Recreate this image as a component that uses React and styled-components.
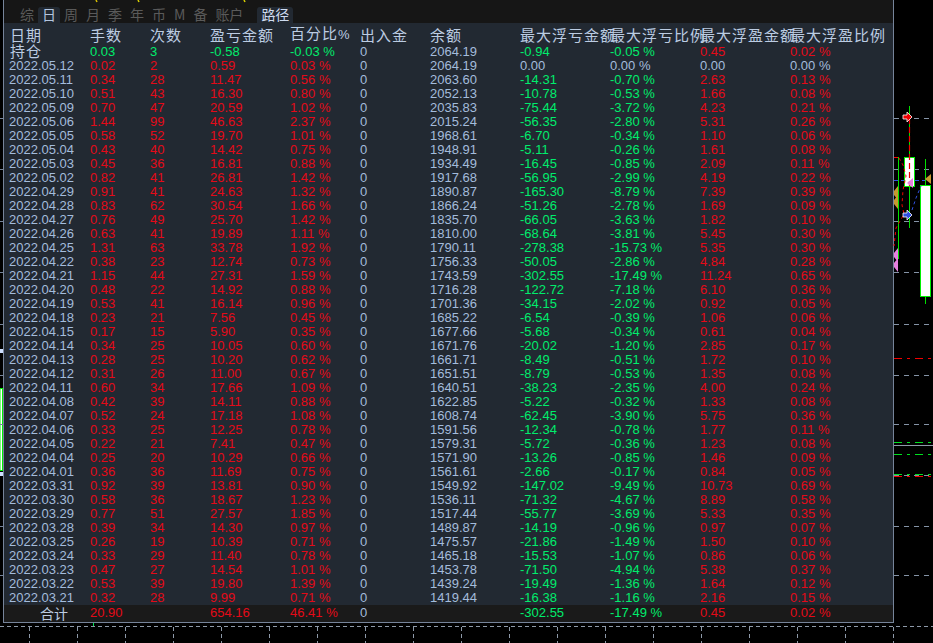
import React from 'react'
import styled, { createGlobalStyle } from 'styled-components'

const RED = '#e40a18'
const GREEN = '#00ec6c'
const BLUE = '#a4bcdc'

const tabs = [
    { label: '综' },
    { label: '日', active: true },
    { label: '周' },
    { label: '月' },
    { label: '季' },
    { label: '年' },
    { label: '币' },
    { label: 'M' },
    { label: '备' },
    { label: '账户' },
    { label: '路径', active: true, bright: true, gap: true },
]

const headers = [
    { label: '日期' },
    { label: '手数' },
    { label: '次数' },
    { label: '盈亏金额' },
    { label: '百分比', unit: '%' },
    { label: '出入金' },
    { label: '余额' },
    { label: '最大浮亏金额' },
    { label: '最大浮亏比例' },
    { label: '最大浮盈金额' },
    { label: '最大浮盈比例' },
]

// date, lots, trades, profit, pct, balance, max loss, loss pct, max gain, gain pct
const rows = `2022.05.12 0.02 2 0.59 0.03 2064.19 0.00 0.00 0.00 0.00
2022.05.11 0.34 28 11.47 0.56 2063.60 -14.31 -0.70 2.63 0.13
2022.05.10 0.51 43 16.30 0.80 2052.13 -10.78 -0.53 1.66 0.08
2022.05.09 0.70 47 20.59 1.02 2035.83 -75.44 -3.72 4.23 0.21
2022.05.06 1.44 99 46.63 2.37 2015.24 -56.35 -2.80 5.31 0.26
2022.05.05 0.58 52 19.70 1.01 1968.61 -6.70 -0.34 1.10 0.06
2022.05.04 0.43 40 14.42 0.75 1948.91 -5.11 -0.26 1.61 0.08
2022.05.03 0.45 36 16.81 0.88 1934.49 -16.45 -0.85 2.09 0.11
2022.05.02 0.82 41 26.81 1.42 1917.68 -56.95 -2.99 4.19 0.22
2022.04.29 0.91 41 24.63 1.32 1890.87 -165.30 -8.79 7.39 0.39
2022.04.28 0.83 62 30.54 1.66 1866.24 -51.26 -2.78 1.69 0.09
2022.04.27 0.76 49 25.70 1.42 1835.70 -66.05 -3.63 1.82 0.10
2022.04.26 0.63 41 19.89 1.11 1810.00 -68.64 -3.81 5.45 0.30
2022.04.25 1.31 63 33.78 1.92 1790.11 -278.38 -15.73 5.35 0.30
2022.04.22 0.38 23 12.74 0.73 1756.33 -50.05 -2.86 4.84 0.28
2022.04.21 1.15 44 27.31 1.59 1743.59 -302.55 -17.49 11.24 0.65
2022.04.20 0.48 22 14.92 0.88 1716.28 -122.72 -7.18 6.10 0.36
2022.04.19 0.53 41 16.14 0.96 1701.36 -34.15 -2.02 0.92 0.05
2022.04.18 0.23 21 7.56 0.45 1685.22 -6.54 -0.39 1.06 0.06
2022.04.15 0.17 15 5.90 0.35 1677.66 -5.68 -0.34 0.61 0.04
2022.04.14 0.34 25 10.05 0.60 1671.76 -20.02 -1.20 2.85 0.17
2022.04.13 0.28 25 10.20 0.62 1661.71 -8.49 -0.51 1.72 0.10
2022.04.12 0.31 26 11.00 0.67 1651.51 -8.79 -0.53 1.35 0.08
2022.04.11 0.60 34 17.66 1.09 1640.51 -38.23 -2.35 4.00 0.24
2022.04.08 0.42 39 14.11 0.88 1622.85 -5.22 -0.32 1.33 0.08
2022.04.07 0.52 24 17.18 1.08 1608.74 -62.45 -3.90 5.75 0.36
2022.04.06 0.33 25 12.25 0.78 1591.56 -12.34 -0.78 1.77 0.11
2022.04.05 0.22 21 7.41 0.47 1579.31 -5.72 -0.36 1.23 0.08
2022.04.04 0.25 20 10.29 0.66 1571.90 -13.26 -0.85 1.46 0.09
2022.04.01 0.36 36 11.69 0.75 1561.61 -2.66 -0.17 0.84 0.05
2022.03.31 0.92 39 13.81 0.90 1549.92 -147.02 -9.49 10.73 0.69
2022.03.30 0.58 36 18.67 1.23 1536.11 -71.32 -4.67 8.89 0.58
2022.03.29 0.77 51 27.57 1.85 1517.44 -55.77 -3.69 5.33 0.35
2022.03.28 0.39 34 14.30 0.97 1489.87 -14.19 -0.96 0.97 0.07
2022.03.25 0.26 19 10.39 0.71 1475.57 -21.86 -1.49 1.50 0.10
2022.03.24 0.33 29 11.40 0.78 1465.18 -15.53 -1.07 0.86 0.06
2022.03.23 0.47 27 14.54 1.01 1453.78 -71.50 -4.94 5.38 0.37
2022.03.22 0.53 39 19.80 1.39 1439.24 -19.49 -1.36 1.64 0.12
2022.03.21 0.32 28 9.99 0.71 1419.44 -16.38 -1.16 2.16 0.15`.split('\n').map(line => line.split(' '))

const toneOf = (value) => {
    const n = parseFloat(value)
    if (n === 0) return BLUE
    return n < 0 ? GREEN : RED
}

const Global = createGlobalStyle`
    html, body {
        margin: 0;
        padding: 0;
        background: #000;
    }
`

const Screen = styled.div`
    position: relative;
    width: 933px;
    height: 643px;
    overflow: hidden;
    background: #000;
    font-family: "Liberation Sans", "Noto Sans CJK SC", sans-serif;
`

const Panel = styled.div`
    box-sizing: border-box;
    width: 891px;
    height: 623px;
    margin-left: 3px;
    display: flex;
    flex-direction: column;
    background: #222932;
    border: 1px solid #76849a;
    border-top: 0;
`

const TopBar = styled.div`
    height: 23px;
    display: flex;
    align-items: flex-end;
    padding-left: 12px;
    background: #161616;
`

const Tab = styled.div`
    box-sizing: border-box;
    height: 16px;
    margin-left: ${p => (p.$gap ? '10px' : '0')};
    padding: 0 4px 1px;
    border-radius: 3px 3px 0 0;
    display: flex;
    align-items: center;
    font-family: "Noto Sans CJK SC", sans-serif;
    font-size: 14px;
    line-height: 15px;
    color: ${p => (p.$bright ? '#cfdcf0' : p.$active ? '#b4c6e0' : '#5a5a5a')};
    background: ${p => (p.$active ? '#222932' : 'transparent')};
`

const Grid = styled.div`
    display: grid;
    grid-template-columns: 80px 60px 60px 80px 70px 70px 90px 90px 90px 90px 90px;
    padding-left: 6px;
    white-space: nowrap;
`

const HeaderRow = styled(Grid)`
    height: 21px;
    align-items: end;
    font-family: "Noto Sans CJK SC", sans-serif;
    font-size: 15px;
    line-height: 18px;
    letter-spacing: 1px;
    color: #bccce2;
`

const HeaderUnit = styled.span`
    font-family: "Liberation Sans", sans-serif;
    font-size: 13px;
    letter-spacing: 0;
`

const Row = styled(Grid)`
    box-sizing: border-box;
    height: 14px;
    padding-top: 1px;
    align-items: start;
    font-size: 13px;
    line-height: 14px;
`

const Rows = styled.div`
    flex: 1;
    display: flex;
    flex-direction: column;
`

const Cell = styled.div`
    min-width: 0;
    height: 13px;
    color: ${p => p.$tone || BLUE};
`

const DateCell = styled(Cell)`
    margin-left: -1px;
`

const HoldLabel = styled(Cell)`
    margin-top: -1px;
    font-family: "Noto Sans CJK SC", sans-serif;
    font-size: 15px;
    letter-spacing: 1px;
    color: #bccce2;
`

const Footer = styled(Row)`
    height: 17px;
    padding-top: 1px;
    background: #1a1a1a;
`

const TotalLabel = styled.div`
    height: 13px;
    padding-left: 30px;
    font-family: "Noto Sans CJK SC", sans-serif;
    font-size: 14px;
    color: #bccce2;
`

const Chart = styled.svg`
    position: absolute;
    left: 0;
    top: 0;
    pointer-events: none;
`

function ChartOverlay() {
    const grid = [118, 169, 221, 272, 324, 375, 424, 475, 526, 575]
    const vertical = Array.from({ length: 19 }, (_, i) => 29 + 48 * i)
    return (
        <Chart width="933" height="643" viewBox="0 0 933 643">
            {/* left edge of the chart, mostly behind the panel */}
            <rect x="0" y="388.5" width="2.5" height="82" fill="#fff" stroke="#00f000" strokeWidth="1" />
            {grid.map(y => <line key={y} x1="0" x2="3" y1={y + 0.5} y2={y + 0.5} stroke="#76849a" />)}
            <rect x="0" y="349" width="3" height="4" fill="#cfe0ff" />
            <rect x="0" y="472" width="3" height="4" fill="#cfe0ff" />

            {/* grid */}
            {grid.map(y => (
                <line key={y} x1="894" x2="933" y1={y + 0.5} y2={y + 0.5} stroke="#8593a6" strokeDasharray="5 5" />
            ))}
            <line x1="0" x2="933" y1="626.5" y2="626.5" stroke="#8d99a8" strokeDasharray="4 3" />
            {vertical.map(x => (
                <line key={x} x1={x + 0.5} x2={x + 0.5} y1="627" y2="643" stroke="#8d99a8" strokeDasharray="4 3" />
            ))}
            <line x1="93.5" x2="93.5" y1="623" y2="626" stroke="#00e050" />
            <line x1="96" x2="97" y1="0" y2="2" stroke="#d8c000" strokeWidth="1.5" />
            <line x1="138" x2="139" y1="0" y2="2" stroke="#d8d000" strokeWidth="1.5" />
            <line x1="244" x2="245" y1="0" y2="2" stroke="#d8d000" strokeWidth="1.5" />

            {/* price levels */}
            <line x1="894" x2="933" y1="445.5" y2="445.5" stroke="#8d99a8" />
            <line x1="894" x2="933" y1="358.5" y2="358.5" stroke="#f00000" strokeDasharray="8 5 3 5" />
            <line x1="894" x2="933" y1="442.5" y2="442.5" stroke="#00e020" strokeDasharray="8 5 3 5" />
            <line x1="894" x2="933" y1="454.5" y2="454.5" stroke="#00e020" strokeDasharray="8 5 3 5" />
            <line x1="894" x2="933" y1="474.5" y2="474.5" stroke="#00e020" strokeDasharray="8 5 3 5" />
            <line x1="894" x2="933" y1="476.5" y2="476.5" stroke="#f00000" strokeDasharray="8 5 3 5" />
            <line x1="894" x2="925" y1="180.5" y2="180.5" stroke="#3050e0" strokeDasharray="4 3" />

            {/* candles */}
            <line x1="898.5" x2="898.5" y1="157" y2="259" stroke="#00e000" />
            <line x1="894" x2="898" y1="157.5" y2="157.5" stroke="#ff0000" />
            <line x1="909.5" x2="909.5" y1="106" y2="228" stroke="#00e000" />
            <rect x="904.5" y="157.5" width="10" height="29" fill="#fff" stroke="#00f000" />
            <line x1="909.5" x2="909.5" y1="118" y2="186" stroke="#f00000" strokeWidth="1.2" strokeDasharray="6 3" />
            <line x1="925.5" x2="925.5" y1="159" y2="304" stroke="#00e000" />
            <rect x="920.5" y="185.5" width="10" height="111" fill="#fff" stroke="#00f000" />

            {/* trade lines */}
            <polyline points="899,158 903,165 906,176 903,190 902,205 904,214" fill="none" stroke="#f00000" strokeDasharray="3 3" />
            <polyline points="903,216 896,228 894,246" fill="none" stroke="#f00000" strokeDasharray="3 3" />
            <polyline points="912,210 916,198 921,186" fill="none" stroke="#3050e0" strokeDasharray="3 3" />

            {/* trade arrows */}
            <path d="M903 115h4v-3l5 5-5 5v-3h-4z" fill="#f00000" stroke="#fff" strokeWidth="0.8" />
            <path d="M903 213h4v-3l5 5-5 5v-3h-4z" fill="#3050e0" stroke="#fff" strokeWidth="0.8" />
            <path d="M907 183l6-5v10z" fill="#e880e0" />
            <path d="M925 179l6-5v10z" fill="#c89830" />
            <path d="M894 191l4-5v14l-4-5z M894 200l4-5v14l-4-5z" fill="#c89830" />
            <path d="M894 253l4-5v14l-4-5z M894 263l4-5v14l-4-5z" fill="#e880e0" />
        </Chart>
    )
}

export default function App() {
    return (
        <Screen>
            <Global />
            <Panel>
                <TopBar>
                    {tabs.map(t => (
                        <Tab key={t.label} $active={t.active} $bright={t.bright} $gap={t.gap}>{t.label}</Tab>
                    ))}
                </TopBar>
                <HeaderRow>
                    {headers.map(h => <div key={h.label}>{h.label}{h.unit && <HeaderUnit>{h.unit}</HeaderUnit>}</div>)}
                </HeaderRow>
                <Rows>
                    <Row>
                        <HoldLabel>持仓</HoldLabel>
                        <Cell $tone={GREEN}>0.03</Cell>
                        <Cell $tone={GREEN}>3</Cell>
                        <Cell $tone={GREEN}>-0.58</Cell>
                        <Cell $tone={GREEN}>-0.03 %</Cell>
                        <Cell>0</Cell>
                        <Cell>2064.19</Cell>
                        <Cell $tone={GREEN}>-0.94</Cell>
                        <Cell $tone={GREEN}>-0.05 %</Cell>
                        <Cell $tone={RED}>0.45</Cell>
                        <Cell $tone={RED}>0.02 %</Cell>
                    </Row>
                    {rows.map(r => (
                        <Row key={r[0]}>
                            <DateCell>{r[0]}</DateCell>
                            <Cell $tone={RED}>{r[1]}</Cell>
                            <Cell $tone={RED}>{r[2]}</Cell>
                            <Cell $tone={RED}>{r[3]}</Cell>
                            <Cell $tone={RED}>{r[4]} %</Cell>
                            <Cell>0</Cell>
                            <Cell>{r[5]}</Cell>
                            <Cell $tone={toneOf(r[6])}>{r[6]}</Cell>
                            <Cell $tone={toneOf(r[7])}>{r[7]} %</Cell>
                            <Cell $tone={toneOf(r[8])}>{r[8]}</Cell>
                            <Cell $tone={toneOf(r[9])}>{r[9]} %</Cell>
                        </Row>
                    ))}
                </Rows>
                <Footer>
                    <TotalLabel>合计</TotalLabel>
                    <Cell $tone={RED}>20.90</Cell>
                    <Cell />
                    <Cell $tone={RED}>654.16</Cell>
                    <Cell $tone={RED}>46.41 %</Cell>
                    <Cell>0</Cell>
                    <Cell />
                    <Cell $tone={GREEN}>-302.55</Cell>
                    <Cell $tone={GREEN}>-17.49 %</Cell>
                    <Cell $tone={RED}>0.45</Cell>
                    <Cell $tone={RED}>0.02 %</Cell>
                </Footer>
            </Panel>
            <ChartOverlay />
        </Screen>
    )
}
